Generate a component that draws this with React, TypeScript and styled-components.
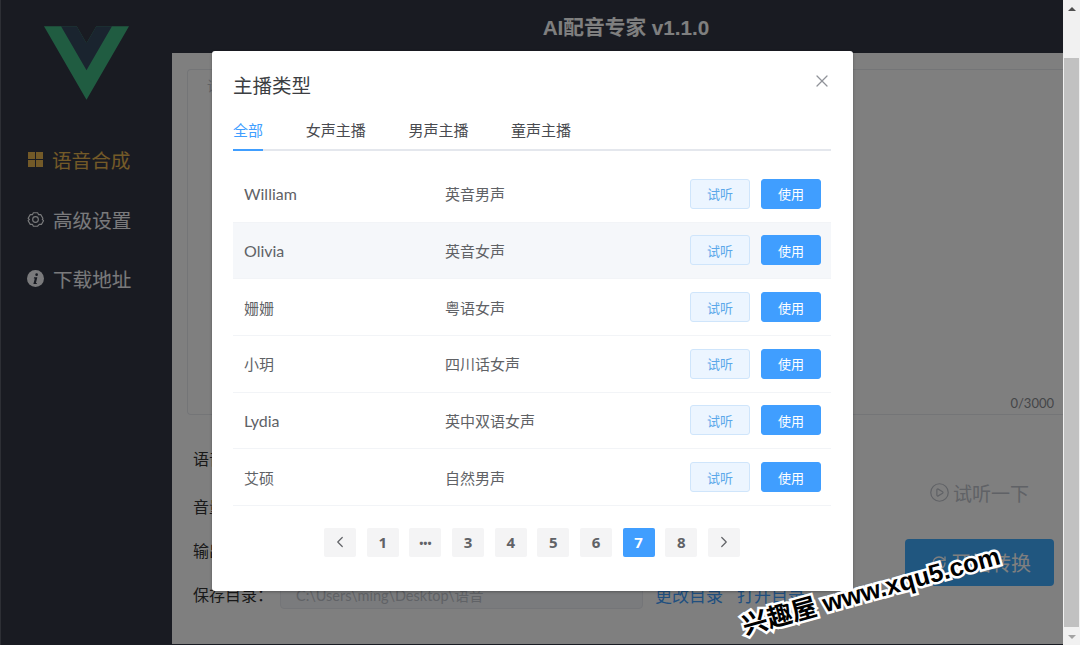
import React from "react";
import styled, { createGlobalStyle } from "styled-components";
import { ChevronLeft, ChevronRight, CirclePlay, X, RefreshCw } from "lucide-react";

const FONT = `Lato, "Noto Sans CJK SC", sans-serif`;

const Global = createGlobalStyle`
  html, body { margin: 0; padding: 0; height: 100%; overflow: hidden; background: #fff; }
  #root { height: 100%; }
  * { box-sizing: border-box; }
  body { font-family: ${FONT}; }
`;

const Window = styled.div`
  position: relative;
  display: flex;
  width: 1080px;
  height: 645px;
  overflow: hidden;
`;
const Page = styled.div`
  display: flex;
  flex: 1;
  min-width: 0;
  border-left: 1px solid #5a5f6a;
`;
const Sidebar = styled.aside`
  width: 171px;
  flex-shrink: 0;
  background: #323745;
  display: flex;
  flex-direction: column;
  padding-top: 26px;
`;
const LogoWrap = styled.div`
  padding-left: 43px;
  height: 98px;
`;
const Menu = styled.nav`
  display: flex;
  flex-direction: column;
  padding: 6px 0 0 26px;
`;
const MenuItem = styled.div<{ $active?: boolean }>`
  display: flex;
  align-items: center;
  gap: 9px;
  height: 59.5px;
  font-size: 19.6px;
  color: ${(p) => (p.$active ? "#e6b450" : "#f4f5f8")};
`;
const GridIcon = styled.span`
  display: grid;
  grid-template-columns: 7px 7px;
  grid-template-rows: 7px 7px;
  gap: 1px;
  width: 16px;
  padding-left: 1px;
  span { background: #e6b450; }
`;
const Main = styled.div`
  flex: 1;
  min-width: 0;
  display: flex;
  flex-direction: column;
  background: #323745;
`;
const Header = styled.header`
  height: 53px;
  flex-shrink: 0;
  padding: 0 0 1px 17px;
  display: flex;
  align-items: center;
  justify-content: center;
  color: #fff;
  font-size: 20.7px;
  font-weight: 700;
  font-family: "Liberation Sans", "Noto Sans CJK SC", sans-serif;
`;
const Content = styled.main`
  flex: 1;
  background: #fff;
  padding: 16px 0 0 15px;
  margin-bottom: 1px;
`;
const TextBox = styled.div`
  position: relative;
  height: 346px;
  border: 1px solid #e8eaef;
  border-right: none;
  border-radius: 4px 0 0 4px;
  padding: 5px 0 0 19px;
  font-size: 14px;
  color: #c0c4cc;
`;
const Counter = styled.span`
  position: absolute;
  right: 9px;
  bottom: 3px;
  font-size: 13px;
  color: #8a8d92;
`;
const Lower = styled.div`
  display: flex;
  justify-content: space-between;
  padding: 21px 9px 0 6px;
`;
const Form = styled.div`
  display: flex;
  flex-direction: column;
`;
const FormRow = styled.div<{ $spaced?: boolean }>`
  display: flex;
  align-items: center;
  height: 44px;
  margin-bottom: ${(p) => (p.$spaced ? "4px" : "0")};
  font-size: 16px;
  color: #333;
`;
const Label = styled.span`
  width: 87px;
`;
const PathInput = styled.div`
  width: 363px;
  height: 30px;
  display: flex;
  align-items: center;
  padding-left: 15px;
  background: #f5f7fa;
  border: 1px solid #e9ebf0;
  border-radius: 4px;
  font-size: 14.5px;
  color: #c0c4cc;
`;
const Link = styled.span`
  color: #409eff;
  font-size: 17px;
  margin-left: 12px;
  &:last-child { margin-left: 14px; }
`;
const Actions = styled.div`
  width: 149px;
  display: flex;
  flex-direction: column;
  align-items: stretch;
`;
const Listen = styled.div`
  height: 46px;
  margin-top: 33px;
  display: flex;
  align-items: center;
  gap: 3px;
  padding-left: 24px;
  font-size: 19px;
  color: #c0c4cc;
`;
const Convert = styled.div`
  height: 47px;
  margin-top: 24px;
  display: flex;
  align-items: center;
  gap: 4px;
  padding-left: 26px;
  border-radius: 4px;
  background: #40acff;
  color: #fff;
  font-size: 20px;
`;
const Overlay = styled.div`
  position: absolute;
  left: 0;
  top: 0;
  bottom: 0;
  right: 17px;
  background: rgba(0, 0, 0, 0.5);
`;
const Modal = styled.section`
  position: absolute;
  left: 212px;
  top: 51px;
  width: 641px;
  height: 540px;
  padding: 21px 22px 0 21px;
  background: #fff;
  border-radius: 3px;
  box-shadow: 0 1px 3px rgba(0, 0, 0, 0.3);
`;
const TitleRow = styled.div`
  display: flex;
  justify-content: space-between;
  align-items: flex-start;
  height: 38px;
`;
const Title = styled.h2`
  margin: 0;
  font-size: 19.5px;
  line-height: 28px;
  font-weight: 400;
  color: #3c3e42;
`;
const CloseBtn = styled.span`
  display: flex;
  color: #909399;
  margin: -1px -1px 0 0;
`;
const Tabs = styled.div`
  display: flex;
  gap: 42.7px;
  height: 41px;
  border-bottom: 2px solid #e4e7ed;
`;
const Tab = styled.div<{ $active?: boolean }>`
  height: 41px;
  line-height: 41px;
  font-size: 15px;
  color: ${(p) => (p.$active ? "#409eff" : "#494b50")};
  border-bottom: 2px solid ${(p) => (p.$active ? "#409eff" : "transparent")};
`;
const List = styled.div`
  margin-top: 15px;
`;
const Row = styled.div<{ $hl?: boolean }>`
  display: grid;
  grid-template-columns: 201px 1fr auto;
  align-items: center;
  height: 56.65px;
  padding: 0 10px 0 11px;
  border-bottom: 1px solid #f2f4f7;
  background: ${(p) => (p.$hl ? "#f5f7fa" : "#fff")};
  color: #606266;
`;
const Name = styled.span<{ $cjk?: boolean }>`
  font-size: ${(p) => (p.$cjk ? "15px" : "16px")};
`;
const Kind = styled.span`
  font-size: 15px;
`;
const Buttons = styled.div`
  display: flex;
  gap: 11px;
`;
const Btn = styled.button<{ $primary?: boolean }>`
  width: 60px;
  height: 30px;
  padding: 0;
  font-family: inherit;
  font-size: 13px;
  border-radius: 3px;
  border: 1px solid ${(p) => (p.$primary ? "#409eff" : "#cfe5fb")};
  background: ${(p) => (p.$primary ? "#409eff" : "#ecf5ff")};
  color: ${(p) => (p.$primary ? "#fff" : "#5ba8ea")};
`;
const Pager = styled.div`
  display: flex;
  justify-content: center;
  gap: 10.65px;
  margin-top: 22px;
`;
const PageBtn = styled.span<{ $active?: boolean }>`
  width: 32px;
  height: 29px;
  display: flex;
  align-items: center;
  justify-content: center;
  border-radius: 2px;
  font-family: "Open Sans", sans-serif;
  font-size: 15px;
  font-weight: 700;
  background: ${(p) => (p.$active ? "#409eff" : "#f4f4f5")};
  color: ${(p) => (p.$active ? "#fff" : "#606266")};
`;
const Dots = styled.span`
  font-size: 11px;
  letter-spacing: 0;
`;
const Scrollbar = styled.div`
  width: 17px;
  flex-shrink: 0;
  display: flex;
  flex-direction: column;
  background: #f1f1f1;
`;
const Arrow = styled.div<{ $down?: boolean }>`
  height: 17px;
  display: flex;
  align-items: center;
  justify-content: center;
  &::before {
    content: "";
    border-left: 4px solid transparent;
    border-right: 4px solid transparent;
    ${(p) =>
      p.$down
        ? "border-top: 4px solid #a3a3a3;"
        : "border-bottom: 4px solid #505050;"}
  }
`;
const Track = styled.div`
  flex: 1;
  padding: 41px 1px 1px 1px;
  display: flex;
`;
const Thumb = styled.div`
  flex: 1;
  background: #c1c1c1;
`;
const Watermark = styled.div`
  position: absolute;
  left: 738px;
  top: 574px;
  width: 270px;
  white-space: nowrap;
  transform: rotate(-15.5deg);
  transform-origin: center;
  font-family: "Liberation Sans", "Noto Sans CJK SC", sans-serif;
  font-size: 25.3px;
  line-height: 32px;
  font-weight: 700;
  color: #000;
  -webkit-text-stroke: 5px #fff;
  paint-order: stroke fill;
`;

const VueLogo = () => (
  <svg width="85" height="74" viewBox="0 0 261.76 226.69">
    <path d="M161.096.001l-30.225 52.351L100.647.001H-.005l130.876 226.688L261.749.001z" fill="#41b883" />
    <path d="M161.096.001l-30.225 52.351L100.647.001H52.346l78.525 136.01L209.398.001z" fill="#35495e" />
  </svg>
);

const GearIcon = () => (
  <svg width="17" height="17" viewBox="0 0 24 24" fill="none" stroke="#f4f5f8" strokeWidth="1.6" strokeLinejoin="round">
    <path d="M9 2.5h6l1.4 2.7 3-.1 3 5.2L21.7 12l1.7 1.7-3 5.2-3-.1L15 21.5H9l-1.4-2.7-3 .1-3-5.2L3.3 12 1.6 10.3l3-5.2 3 .1z" />
    <circle cx="12" cy="12" r="4" />
  </svg>
);

const InfoIcon = () => (
  <svg width="17" height="17" viewBox="0 0 24 24">
    <circle cx="12" cy="12" r="12" fill="#f4f5f8" />
    <circle cx="13.6" cy="6.6" r="1.9" fill="#323745" />
    <path d="M10 10.4h4.6l-2 8h1.4l-.4 1.5H9l2-8H9.6z" fill="#323745" />
  </svg>
);

const rows: [string, string, boolean][] = [
  ["William", "英音男声", false],
  ["Olivia", "英音女声", false],
  ["姗姗", "粤语女声", true],
  ["小玥", "四川话女声", true],
  ["Lydia", "英中双语女声", false],
  ["艾硕", "自然男声", true],
];

const pages = ["1", "•••", "3", "4", "5", "6", "7", "8"];

export default function App() {
  return (
    <Window>
      <Global />
      <Page>
        <Sidebar>
          <LogoWrap>
            <VueLogo />
          </LogoWrap>
          <Menu>
            <MenuItem $active>
              <GridIcon>
                <span />
                <span />
                <span />
                <span />
              </GridIcon>
              语音合成
            </MenuItem>
            <MenuItem>
              <GearIcon />
              高级设置
            </MenuItem>
            <MenuItem>
              <InfoIcon />
              下载地址
            </MenuItem>
          </Menu>
        </Sidebar>
        <Main>
          <Header>AI配音专家 v1.1.0</Header>
          <Content>
            <TextBox>
              请
              <Counter>0/3000</Counter>
            </TextBox>
            <Lower>
              <Form>
                <FormRow $spaced>
                  <Label>语音类型：</Label>
                </FormRow>
                <FormRow>
                  <Label>音量：</Label>
                </FormRow>
                <FormRow>
                  <Label>输出格式：</Label>
                </FormRow>
                <FormRow>
                  <Label>保存目录：</Label>
                  <PathInput>C:\Users\ming\Desktop\语音</PathInput>
                  <Link>更改目录</Link>
                  <Link>打开目录</Link>
                </FormRow>
              </Form>
              <Actions>
                <Listen>
                  <CirclePlay size={21} strokeWidth={1.4} />
                  试听一下
                </Listen>
                <Convert>
                  <RefreshCw size={16} />
                  开始转换
                </Convert>
              </Actions>
            </Lower>
          </Content>
        </Main>
      </Page>
      <Scrollbar>
        <Arrow />
        <Track>
          <Thumb />
        </Track>
        <Arrow $down />
      </Scrollbar>
      <Overlay />
      <Modal>
        <TitleRow>
          <Title>主播类型</Title>
          <CloseBtn>
            <X size={20} strokeWidth={1.5} />
          </CloseBtn>
        </TitleRow>
        <Tabs>
          <Tab $active>全部</Tab>
          <Tab>女声主播</Tab>
          <Tab>男声主播</Tab>
          <Tab>童声主播</Tab>
        </Tabs>
        <List>
          {rows.map(([name, kind, cjk], i) => (
            <Row key={name} $hl={i === 1}>
              <Name $cjk={cjk}>{name}</Name>
              <Kind>{kind}</Kind>
              <Buttons>
                <Btn>试听</Btn>
                <Btn $primary>使用</Btn>
              </Buttons>
            </Row>
          ))}
        </List>
        <Pager>
          <PageBtn>
            <ChevronLeft size={18} strokeWidth={1.6} />
          </PageBtn>
          {pages.map((p) => (
            <PageBtn key={p} $active={p === "7"}>
              {p === "•••" ? <Dots>{p}</Dots> : p}
            </PageBtn>
          ))}
          <PageBtn>
            <ChevronRight size={18} strokeWidth={1.6} />
          </PageBtn>
        </Pager>
      </Modal>
      <Watermark>兴趣屋 www.xqu5.com</Watermark>
    </Window>
  );
}
